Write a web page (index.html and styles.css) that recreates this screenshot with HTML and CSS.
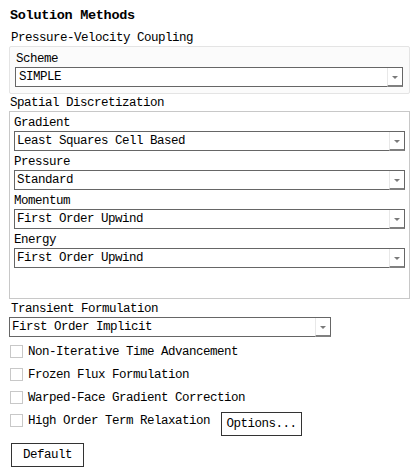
FILE: index.html
```html
<!DOCTYPE html>
<html>
<head>
<meta charset="utf-8">
<link rel="stylesheet" href="styles.css">
</head>
<body>
<div class="panel">
  <div class="title">Solution Methods</div>
  <div class="section-label pv">Pressure-Velocity Coupling</div>
  <div class="group group-light">
    <div class="label first">Scheme</div>
    <div class="select narrow"><span class="value">SIMPLE</span><span class="drop"><span class="arrow"></span></span></div>
  </div>
  <div class="section-label">Spatial Discretization</div>
  <div class="group group-dark">
    <div class="label first">Gradient</div>
    <div class="select"><span class="value">Least Squares Cell Based</span><span class="drop"><span class="arrow"></span></span></div>
    <div class="label">Pressure</div>
    <div class="select"><span class="value">Standard</span><span class="drop"><span class="arrow"></span></span></div>
    <div class="label">Momentum</div>
    <div class="select"><span class="value">First Order Upwind</span><span class="drop"><span class="arrow"></span></span></div>
    <div class="label">Energy</div>
    <div class="select"><span class="value">First Order Upwind</span><span class="drop"><span class="arrow"></span></span></div>
  </div>
  <div class="section-label transient">Transient Formulation</div>
  <div class="select short"><span class="value">First Order Implicit</span><span class="drop"><span class="arrow"></span></span></div>
  <div class="checks">
    <div class="check"><span class="box"></span><span>Non-Iterative Time Advancement</span></div>
    <div class="check"><span class="box"></span><span>Frozen Flux Formulation</span></div>
    <div class="check"><span class="box"></span><span>Warped-Face Gradient Correction</span></div>
    <div class="check last"><span class="box"></span><span>High Order Term Relaxation</span><button class="btn options">Options...</button></div>
  </div>
  <button class="btn default">Default</button>
</div>
</body>
</html>
```

FILE: styles.css
```css
* { box-sizing: border-box; }
html, body { margin: 0; padding: 0; background: #ffffff; }
body {
  font-family: "Liberation Mono", "DejaVu Sans Mono", monospace;
  font-size: 12.5px;
  letter-spacing: -0.5px;
  color: #000;
  width: 419px;
  height: 470px;
  overflow: hidden;
}
.panel {
  display: flex;
  flex-direction: column;
  padding: 0 0 0 9px;
}
.title {
  font-weight: bold;
  font-size: 13.5px;
  letter-spacing: -0.3px;
  line-height: 16px;
  margin-top: 8px;
  padding-left: 1px;
}
.section-label {
  line-height: 15px;
  height: 15px;
  padding-left: 1px;
  margin-top: 2px;
}
.section-label.pv {
  margin-top: 7px;
  padding-left: 2px;
}
.section-label.transient { margin-top: 3px; padding-left: 2px; }
.group {
  width: 401px;
  display: flex;
  flex-direction: column;
}
.group-light {
  border: 1px solid #e4e4e4;
  background: #fbfbfb;
  border-radius: 2px;
  padding: 5px 0 6px 5px;
}
.group-dark {
  border: 1px solid #c8c8c8;
  padding: 4px 0 30px 4px;
}
.label {
  line-height: 15px;
  height: 15px;
  margin-top: 4px;
}
.group-light .label { padding-left: 1px; }
.label.first { margin-top: 0; }
.select {
  display: flex;
  align-items: stretch;
  height: 20px;
  width: 391px;
  border: 1px solid #666;
  background: #fff;
}
.select.narrow { width: 388px; }
.select.short { width: 322px; }
.value {
  flex: 1;
  line-height: 18px;
  padding-left: 2px;
  white-space: nowrap;
}
.narrow .value { padding-left: 3px; }
.drop {
  width: 16px;
  display: flex;
  align-items: center;
  justify-content: center;
  background: #fff;
  border-left: 1px solid #e8e8e8;
  border-right: 1px solid #666;
  border-bottom: 2px solid #808080;
  margin-right: -1px;
  margin-bottom: -1px;
}
.arrow {
  width: 0;
  height: 0;
  border-left: 3px solid transparent;
  border-right: 3px solid transparent;
  border-top: 3px solid #7a7a7a;
  margin-top: 1px;
}
.checks {
  display: flex;
  flex-direction: column;
  margin-top: 3px;
}
.check {
  display: flex;
  align-items: center;
  height: 23px;
  padding-left: 1px;
  white-space: nowrap;
}
.box {
  width: 13px;
  height: 13px;
  border: 1px solid #c8c8c8;
  background: #fff;
  margin-right: 5px;
}
.btn {
  font-family: "Liberation Mono", "DejaVu Sans Mono", monospace;
  font-size: 12.5px;
  letter-spacing: -0.5px;
  color: #000;
  background: #fff;
  border: 1px solid #333;
  border-radius: 0;
  padding: 0;
  height: 24px;
}
.options {
  width: 81px;
  margin-left: 11px;
  margin-top: 6px;
}
.default {
  width: 73px;
  margin-left: 2px;
  margin-top: 11px;
  align-self: flex-start;
}
```
